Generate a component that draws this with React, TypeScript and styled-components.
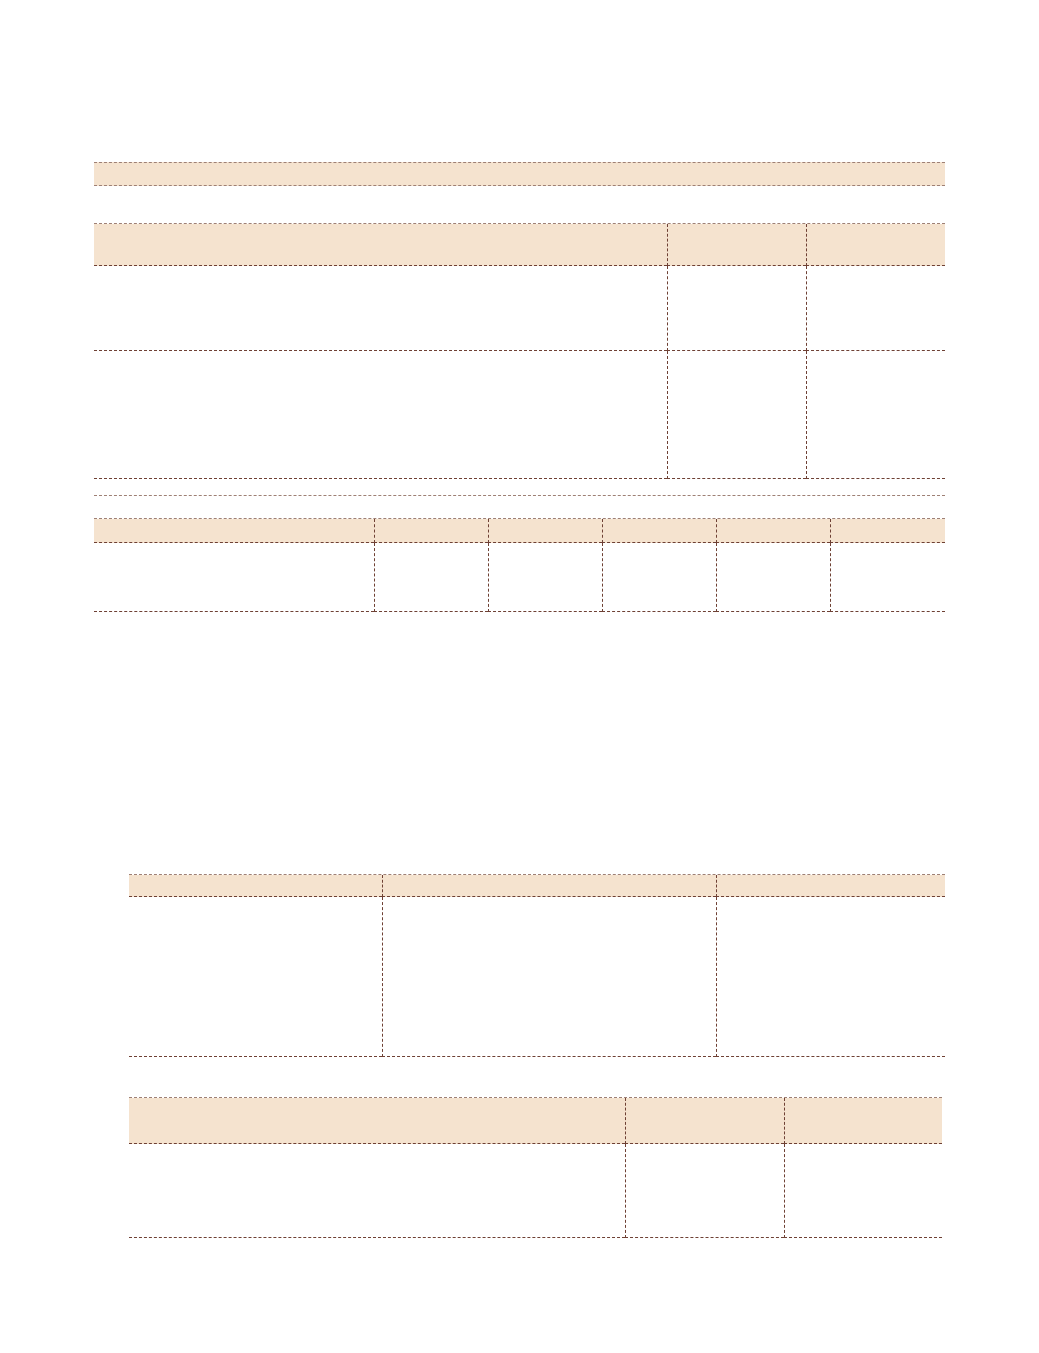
import React from "react";
import styled, { createGlobalStyle } from "styled-components";

const GlobalStyle = createGlobalStyle`
  html, body {
    margin: 0;
    padding: 0;
    background: #fff;
    font-family: "Liberation Sans", Arial, sans-serif;
  }
  * {
    box-sizing: border-box;
  }
`;

const LINE = "#6e4034";
const LINE_SOFT = "#9e8075";
const FILL = "#f5e3cf";

const Page = styled.div`
  width: 1039px;
  min-height: 1353px;
  padding: 162px 94px 0 94px;
  display: flex;
  flex-direction: column;
`;

const Band = styled.div`
  height: 24px;
  background: ${FILL};
  border-top: 1px dashed ${LINE_SOFT};
  border-bottom: 1px dashed ${LINE_SOFT};
`;

interface GridProps {
  $cols: string;
  $top: number;
  $inset?: number;
  $right?: number;
}

const Table = styled.div<GridProps>`
  display: grid;
  grid-template-columns: ${(p) => p.$cols};
  margin-top: ${(p) => p.$top}px;
  margin-left: ${(p) => p.$inset ?? 0}px;
  margin-right: ${(p) => p.$right ?? 0}px;
  border-top: 1px dashed ${LINE_SOFT};
`;

const Cell = styled.div<{ $head?: boolean; $h: number; $first?: boolean }>`
  height: ${(p) => p.$h}px;
  background: ${(p) => (p.$head ? FILL : "transparent")};
  border-bottom: 1px dashed ${LINE};
  border-left: ${(p) => (p.$first ? "none" : `1px dashed ${LINE}`)};
`;

const Rule = styled.div<{ $top: number }>`
  margin-top: ${(p) => p.$top}px;
  border-top: 1px dashed ${LINE_SOFT};
`;

interface SpecProps {
  cols: string;
  top: number;
  rows: number[];
  inset?: number;
  right?: number;
}

const GridTable: React.FC<SpecProps> = ({ cols, top, rows, inset, right }) => {
  const count = cols.split(" ").length;
  return (
    <Table $cols={cols} $top={top} $inset={inset} $right={right}>
      {rows.map((h, r) =>
        Array.from({ length: count }).map((_, c) => (
          <Cell key={`${r}-${c}`} $h={h} $head={r === 0} $first={c === 0} />
        ))
      )}
    </Table>
  );
};

export default function App() {
  return (
    <>
      <GlobalStyle />
      <Page>
        <Band />
        <GridTable cols="573px 139px 139px" top={37} rows={[42, 85, 128]} />
        <Rule $top={16} />
        <GridTable
          cols="280px 114px 114px 114px 114px 115px"
          top={22}
          rows={[24, 69]}
        />
        <GridTable cols="253px 334px 229px" top={262} inset={35} rows={[22, 160]} />
        <GridTable cols="496px 159px 158px" top={40} inset={35} right={3} rows={[46, 94]} />
      </Page>
    </>
  );
}
